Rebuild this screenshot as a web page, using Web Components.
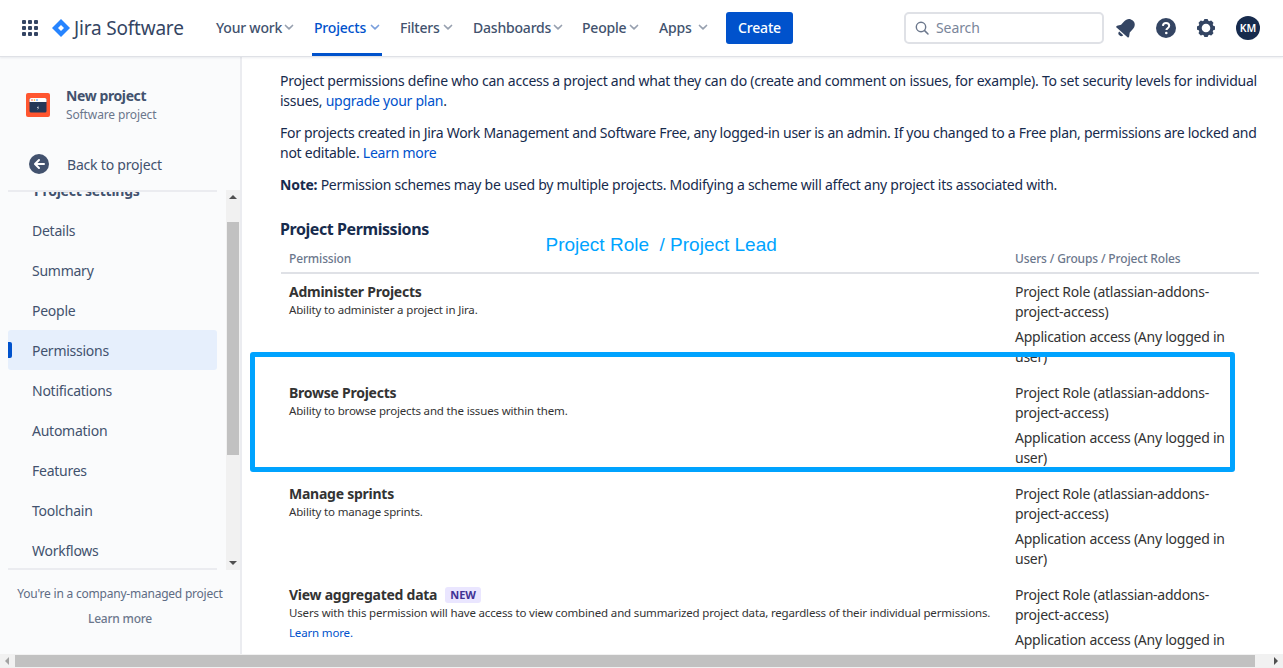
<!DOCTYPE html>
<html lang="en">
<head>
<meta charset="utf-8">
<title>Project permissions</title>
<style>
    html, body {
        margin: 0;
        height: 100%;
        overflow: hidden;
    }
    body {
        font-family: "Noto Sans", sans-serif;
        font-size: 14px;
        color: #172b4d;
        background: #fff;
    }
</style>
</head>
<body>
<jira-page></jira-page>

<script>
const CHEVRON = `<svg width="10" height="10" viewBox="0 0 10 10"><path d="M1.500 3.500 5 6.800l3.500-3.300" fill="none" stroke="currentColor" stroke-width="1.700" stroke-linecap="round" stroke-linejoin="round"/></svg>`;

class NavItem extends HTMLElement {
    constructor() {
        super();
        this.attachShadow({ mode: 'open' });
        this.shadowRoot.innerHTML = `
            <style>
                :host {
                    display: flex;
                    align-items: center;
                    justify-content: space-between;
                    height: 56px;
                    box-sizing: border-box;
                    padding: 0 2px 2px;
                    margin-right: 16px;
                    font-weight: 500;
                    font-size: 14px;
                    letter-spacing: var(--ls);
                    color: #42526e;
                    border-bottom: 3px solid transparent;
                    border-top: 3px solid transparent;
                    white-space: nowrap;
                }
                :host([active]) {
                    color: #0052cc;
                    border-bottom-color: #0052cc;
                }
                span { display: flex; margin-left: 2px; color: #97a0af; }
                :host([active]) span { color: #7a9fdc; }
            </style>
            <slot></slot><span>${CHEVRON}</span>
        `;
    }
}

class TopBar extends HTMLElement {
    constructor() {
        super();
        this.attachShadow({ mode: 'open' });
        this.shadowRoot.innerHTML = `
            <style>
                :host {
                    display: flex;
                    align-items: center;
                    height: 57px;
                    flex: none;
                    box-sizing: border-box;
                    padding: 0 22px;
                    background: #fff;
                    border-bottom: 1px solid #dfe1e6;
                    box-shadow: 0 1px 2px rgba(9, 30, 66, .08);
                    position: relative;
                    z-index: 2;
                    --ls: -.2px;
                }
                .apps { display: grid; grid-template-columns: repeat(3, 4px); gap: 2px; margin-right: 14px; }
                .apps i { width: 4px; height: 4px; background: #344563; border-radius: 1px; }
                .logo { display: flex; align-items: center; width: 162px; flex: none; color: #344563; font-size: 19px; letter-spacing: -.2px; white-space: nowrap; }
                .logo svg { margin-right: 4px; flex: none; }
                nav { display: flex; align-items: center; height: 56px; }
                button {
                    width: 67px;
                    height: 32px;
                    border: 0;
                    padding: 0 0 2px;
                    border-radius: 3px;
                    background: #0052cc;
                    color: #fff;
                    font: 500 14px "Noto Sans", sans-serif;
                    letter-spacing: -.2px;
                }
                .search {
                    display: flex;
                    align-items: center;
                    width: 200px;
                    height: 32px;
                    box-sizing: border-box;
                    margin-left: auto;
                    padding: 0 0 2px 8px;
                    border: 2px solid #dfe1e6;
                    border-radius: 5px;
                    color: #7a869a;
                    letter-spacing: -.1px;
                }
                .search svg { margin: 2px 6px 0 0; }
                .icons { display: flex; align-items: center; margin-left: 10px; margin-right: 1px; }
                .icons > * { display: flex; justify-content: center; align-items: center; width: 24px; height: 24px; margin-right: 16px; }
                .icons > .gear { margin-right: 18px; }
                .icons > .avatar { margin-right: 0; }
                .avatar { border-radius: 50%; background: #172b4d; color: #fff; font-size: 10.5px; font-weight: 600; }
            </style>
            <div class="apps"><i></i><i></i><i></i><i></i><i></i><i></i><i></i><i></i><i></i></div>
            <div class="logo">
                <svg width="18" height="18" viewBox="0 0 18 18"><path fill="#2684ff" d="M9 0 18 9 9 18 0 9Z"/><path fill="#fff" d="M9 6 12 9 9 12 6 9Z"/></svg>
                Jira Software
            </div>
            <nav>
                <nav-item style="width:82px">Your work</nav-item>
                <nav-item style="width:70px" active>Projects</nav-item>
                <nav-item style="width:57px">Filters</nav-item>
                <nav-item style="width:93px">Dashboards</nav-item>
                <nav-item style="width:61px">People</nav-item>
                <nav-item style="width:53px">Apps</nav-item>
                <button>Create</button>
            </nav>
            <div class="search">
                <svg width="16" height="16" viewBox="0 0 16 16"><circle cx="7" cy="7" r="4.700" fill="none" stroke="#6b778c" stroke-width="1.400"/><path d="m10.600 10.600 3.400 3.400" stroke="#6b778c" stroke-width="1.500" stroke-linecap="round"/></svg>
                Search
            </div>
            <div class="icons">
                <div><svg width="22" height="22" viewBox="0 0 20 20"><g transform="rotate(42 10 10)" fill="#344563"><path d="M10 .8C6.400.8 4.700 3.400 4.700 6.800v4L2.600 14v1.400h14.800V14l-2.100-3.200v-4C15.300 3.400 13.600.8 10 .8Z"/><path d="M7.500 16.500h5a2.500 2.500 0 0 1-5 0Z"/></g></svg></div>
                <div><svg width="20" height="20" viewBox="0 0 20 20"><circle cx="10" cy="10" r="10" fill="#344563"/><path d="M6.900 7.900C7 6 8.300 5 10 5c1.800 0 3.200 1.100 3.200 2.800 0 1.300-.8 2-1.700 2.600-.8.500-1.100.9-1.100 1.700" fill="none" stroke="#fff" stroke-width="2"/><circle cx="10.300" cy="15" r="1.300" fill="#fff"/></svg></div>
                <div class="gear"><svg width="20" height="20" viewBox="0 0 20 20"><circle cx="10" cy="10" r="6" fill="none" stroke="#344563" stroke-width="3.400"/><g fill="#344563"><rect x="8" y="1" width="4" height="4" rx=".8"/><rect x="8" y="15" width="4" height="4" rx=".8"/><rect x="1" y="8" width="4" height="4" rx=".8"/><rect x="15" y="8" width="4" height="4" rx=".8"/><g transform="rotate(45 10 10)"><rect x="8" y="1" width="4" height="4" rx=".8"/><rect x="8" y="15" width="4" height="4" rx=".8"/><rect x="1" y="8" width="4" height="4" rx=".8"/><rect x="15" y="8" width="4" height="4" rx=".8"/></g></g></svg></div>
                <div class="avatar">KM</div>
            </div>
        `;
    }
}

class SideLink extends HTMLElement {
    constructor() {
        super();
        this.attachShadow({ mode: 'open' });
        this.shadowRoot.innerHTML = `
            <style>
                :host {
                    display: flex;
                    align-items: center;
                    position: relative;
                    height: 40px;
                    flex: none;
                    box-sizing: border-box;
                    padding-left: 24px;
                    border-radius: 3px;
                    color: #42526e;
                    font-size: 14px;
                    letter-spacing: var(--ls);
                }
                :host([active]) {
                    background: #e6effc;
                }
                :host([active])::before {
                    content: "";
                    position: absolute;
                    left: 0;
                    top: 12px;
                    width: 4px;
                    height: 16px;
                    background: #0052cc;
                    border-radius: 0 2px 2px 0;
                }
            </style>
            <slot></slot>
        `;
    }
}

class SideBar extends HTMLElement {
    constructor() {
        super();
        this.attachShadow({ mode: 'open' });
        this.shadowRoot.innerHTML = `
            <style>
                :host {
                    display: flex;
                    flex-direction: column;
                    flex: none;
                    width: 242px;
                    box-sizing: border-box;
                    border-right: 2px solid #ebecf0;
                    background: #fafbfc;
                    color: #42526e;
                    --ls: -.25px;
                }
                .project { display: flex; align-items: center; height: 96px; flex: none; padding-left: 26px; box-sizing: border-box; }
                .project svg { margin-right: 16px; flex: none; }
                .project b { display: block; font-size: 14px; font-weight: 700; letter-spacing: -.4px; line-height: 18px; }
                .project small { display: block; color: #6b778c; font-size: 12px; letter-spacing: -.12px; line-height: 19px; }
                .back { display: flex; align-items: center; height: 37px; flex: none; padding: 0 0 15px 29px; letter-spacing: -.2px; box-sizing: border-box; }
                .back svg { margin-right: 18px; }
                .middle { display: flex; height: 380px; flex: none; }
                .scroll-view {
                    width: 209px;
                    margin: 0 9px 0 8px;
                    overflow: hidden;
                    box-sizing: border-box;
                    border-top: 2px solid #ebecf0;
                    border-bottom: 2px solid #ebecf0;
                    display: flex;
                    flex-direction: column;
                }
                .title { flex: none; height: 18px; margin: -11px 0 11px; padding-left: 26px; font-weight: 700; font-size: 14px; letter-spacing: var(--ls); }
                .bar { width: 14px; background: #f1f1f1; display: flex; flex-direction: column; align-items: center; }
                .bar i { flex: none; width: 0; height: 0; border: 4px solid transparent; }
                .bar .up { border-bottom: 4px solid #505050; margin-top: 1px; margin-bottom: 16px; }
                .bar .thumb { flex: none; width: 12px; height: 233px; background: #c1c1c1; border: 0; margin-top: 7px; }
                .bar .down { border-top: 4px solid #505050; margin-top: auto; margin-bottom: 1px; }
                .foot { text-align: center; font-size: 12px; color: #5e6c84; letter-spacing: -.22px; padding-top: 15px; }
                .foot div { line-height: 18px; }
                .foot .more { margin-top: 7px; font-weight: 500; color: #6b778c; }
            </style>
            <div class="project">
                <svg width="24" height="24" viewBox="0 0 24 24"><rect width="24" height="24" rx="2" fill="#ff5630"/><rect x="3.500" y="5" width="17" height="14.500" rx="1.500" fill="#253858"/><path d="M3.500 6.500A1.500 1.500 0 0 1 5 5h14a1.500 1.500 0 0 1 1.500 1.500V9h-17Z" fill="#fff"/><circle cx="6" cy="7" r=".8" fill="#ff5630"/><circle cx="8.500" cy="7" r=".8" fill="#ffab00"/><circle cx="11" cy="7" r=".8" fill="#2684ff"/><path d="M12.500 12.500 11 15h1l-.5 2 1.500-2.500h-1Z" fill="#fff"/></svg>
                <div><b>New project</b><small>Software project</small></div>
            </div>
            <div class="back">
                <svg width="20" height="20" viewBox="0 0 20 20"><circle cx="10" cy="10" r="10" fill="#42526e"/><path d="M15 10H6.500M10 6l-4 4 4 4" fill="none" stroke="#fff" stroke-width="2" stroke-linecap="round" stroke-linejoin="round"/></svg>
                Back to project
            </div>
            <div class="middle">
                <div class="scroll-view">
                    <div class="title">Project settings</div>
                    <side-link>Details</side-link>
                    <side-link>Summary</side-link>
                    <side-link>People</side-link>
                    <side-link active>Permissions</side-link>
                    <side-link>Notifications</side-link>
                    <side-link>Automation</side-link>
                    <side-link>Features</side-link>
                    <side-link>Toolchain</side-link>
                    <side-link>Workflows</side-link>
                </div>
                <div class="bar"><i class="up"></i><i class="thumb"></i><i class="down"></i></div>
            </div>
            <div class="foot">
                <div>You're in a company-managed project</div>
                <div class="more">Learn more</div>
            </div>
        `;
    }
}

class PermRow extends HTMLElement {
    constructor() {
        super();
        this.attachShadow({ mode: 'open' });
        this.shadowRoot.innerHTML = `
            <style>
                :host {
                    display: grid;
                    grid-template-columns: 726px 1fr;
                    height: 101px;
                    flex: none;
                    box-sizing: border-box;
                    padding: 8px 0 0 8px;
                    color: #333;
                    letter-spacing: var(--ls);
                }
                .name { font-weight: 700; line-height: 20px; display: flex; align-items: center; gap: 8px; }
                .desc { font-size: 11.5px; line-height: 20px; margin-top: -2px; letter-spacing: -.16px; white-space: nowrap; }
                .roles { line-height: 20px; }
                .roles p { margin: 0 0 5px; white-space: nowrap; }
            </style>
            <div>
                <div class="name"><slot name="name"></slot></div>
                <div class="desc"><slot></slot></div>
            </div>
            <div class="roles">
                <p>Project Role (atlassian-addons-<br>project-access)</p>
                <p>Application access (Any logged in<br>user)</p>
            </div>
        `;
    }
}

class PermTable extends HTMLElement {
    constructor() {
        super();
        this.attachShadow({ mode: 'open' });
        this.shadowRoot.innerHTML = `
            <style>
                :host {
                    display: flex;
                    flex-direction: column;
                    margin-left: 1px;
                    width: 978px;
                }
                .head {
                    display: grid;
                    grid-template-columns: 726px 1fr;
                    height: 30px;
                    flex: none;
                    box-sizing: border-box;
                    padding: 6px 0 0 8px;
                    border-bottom: 2px solid #dfe1e6;
                    color: #6b778c;
                    font-size: 12px;
                    font-weight: 500;
                    line-height: 18px;
                    letter-spacing: -.15px;
                }
            </style>
            <div class="head"><div>Permission</div><div>Users / Groups / Project Roles</div></div>
            <slot></slot>
        `;
    }
}

class HScrollbar extends HTMLElement {
    constructor() {
        super();
        this.attachShadow({ mode: 'open' });
        this.shadowRoot.innerHTML = `
            <style>
                :host {
                    display: flex;
                    align-items: center;
                    height: 14px;
                    flex: none;
                    background: #f1f1f1;
                }
                i { flex: none; width: 0; height: 0; border: 4px solid transparent; }
                .left { border-right-color: #a3a3a3; border-left-width: 0; margin: 0 6px 0 5px; }
                .thumb { width: 1240px; height: 12px; background: #c1c1c1; border: 0; }
                .right { border-left-color: #505050; border-right-width: 0; margin-left: auto; margin-right: 5px; }
            </style>
            <i class="left"></i><i class="thumb"></i><i class="right"></i>
        `;
    }
}

class MarkupLayer extends HTMLElement {
    constructor() {
        super();
        this.attachShadow({ mode: 'open' });
        this.shadowRoot.innerHTML = `
            <style>
                :host { display: contents; }
                .label {
                    position: absolute;
                    left: 545.500px;
                    top: 234px;
                    font: 19px/22px "Liberation Sans", Arial, sans-serif;
                    color: #00a3ff;
                    white-space: pre;
                    z-index: 3;
                }
                .box {
                    position: absolute;
                    left: 250px;
                    top: 352px;
                    width: 985px;
                    height: 120px;
                    box-sizing: border-box;
                    border: 5px solid #00a3ff;
                    border-radius: 3px;
                    z-index: 3;
                }
            </style>
            <div class="label">Project Role  / Project Lead</div>
            <div class="box"></div>
        `;
    }
}

class JiraPage extends HTMLElement {
    constructor() {
        super();
        this.attachShadow({ mode: 'open' });
        this.shadowRoot.innerHTML = `
            <style>
                :host {
                    display: flex;
                    flex-direction: column;
                    height: 668px;
                    overflow: hidden;
                    position: relative;
                    --ls: -.25px;
                }
                .body { display: flex; flex: 1; min-height: 0; }
                main { flex: 1; min-width: 0; overflow: hidden; padding: 14px 0 0 38px; color: #172b4d; letter-spacing: var(--ls); line-height: 20px; }
                p { margin: 0 0 12px; white-space: nowrap; }
                h2 { margin: 22px 0 3px; font-size: 16px; line-height: 24px; font-weight: 700; letter-spacing: -.42px; }
                a { color: #0052cc; text-decoration: none; }
                .tight { letter-spacing: -.282px; }
                .lozenge { display: inline-block; padding: 0 5px; border-radius: 3px; background: #eae6ff; color: #403294; font-size: 11px; font-weight: 700; line-height: 16px; letter-spacing: 0; }
            </style>
            <top-bar></top-bar>
            <div class="body">
                <side-bar></side-bar>
                <main>
                    <p>Project permissions define who can access a project and what they can do (create and comment on issues, for example). To set security levels for individual<br>issues, <a href="#">upgrade your plan</a>.</p>
                    <p><span class="tight">For projects created in Jira Work Management and Software Free, any logged-in user is an admin. If you changed to a Free plan, permissions are locked and</span><br>not editable. <a href="#">Learn more</a></p>
                    <p><b>Note:</b> Permission schemes may be used by multiple projects. Modifying a scheme will affect any project its associated with.</p>
                    <h2>Project Permissions</h2>
                    <perm-table>
                        <perm-row><span slot="name">Administer Projects</span>Ability to administer a project in Jira.</perm-row>
                        <perm-row><span slot="name">Browse Projects</span>Ability to browse projects and the issues within them.</perm-row>
                        <perm-row><span slot="name">Manage sprints</span>Ability to manage sprints.</perm-row>
                        <perm-row><span slot="name">View aggregated data</span><span slot="name" class="lozenge">NEW</span>Users with this permission will have access to view combined and summarized project data, regardless of their individual permissions.<br><a href="#">Learn more.</a></perm-row>
                    </perm-table>
                </main>
            </div>
            <h-scrollbar></h-scrollbar>
            <markup-layer></markup-layer>
        `;
    }
}

customElements.define('nav-item', NavItem);
customElements.define('top-bar', TopBar);
customElements.define('side-link', SideLink);
customElements.define('side-bar', SideBar);
customElements.define('perm-row', PermRow);
customElements.define('perm-table', PermTable);
customElements.define('h-scrollbar', HScrollbar);
customElements.define('markup-layer', MarkupLayer);
customElements.define('jira-page', JiraPage);
</script>
</body>
</html>
